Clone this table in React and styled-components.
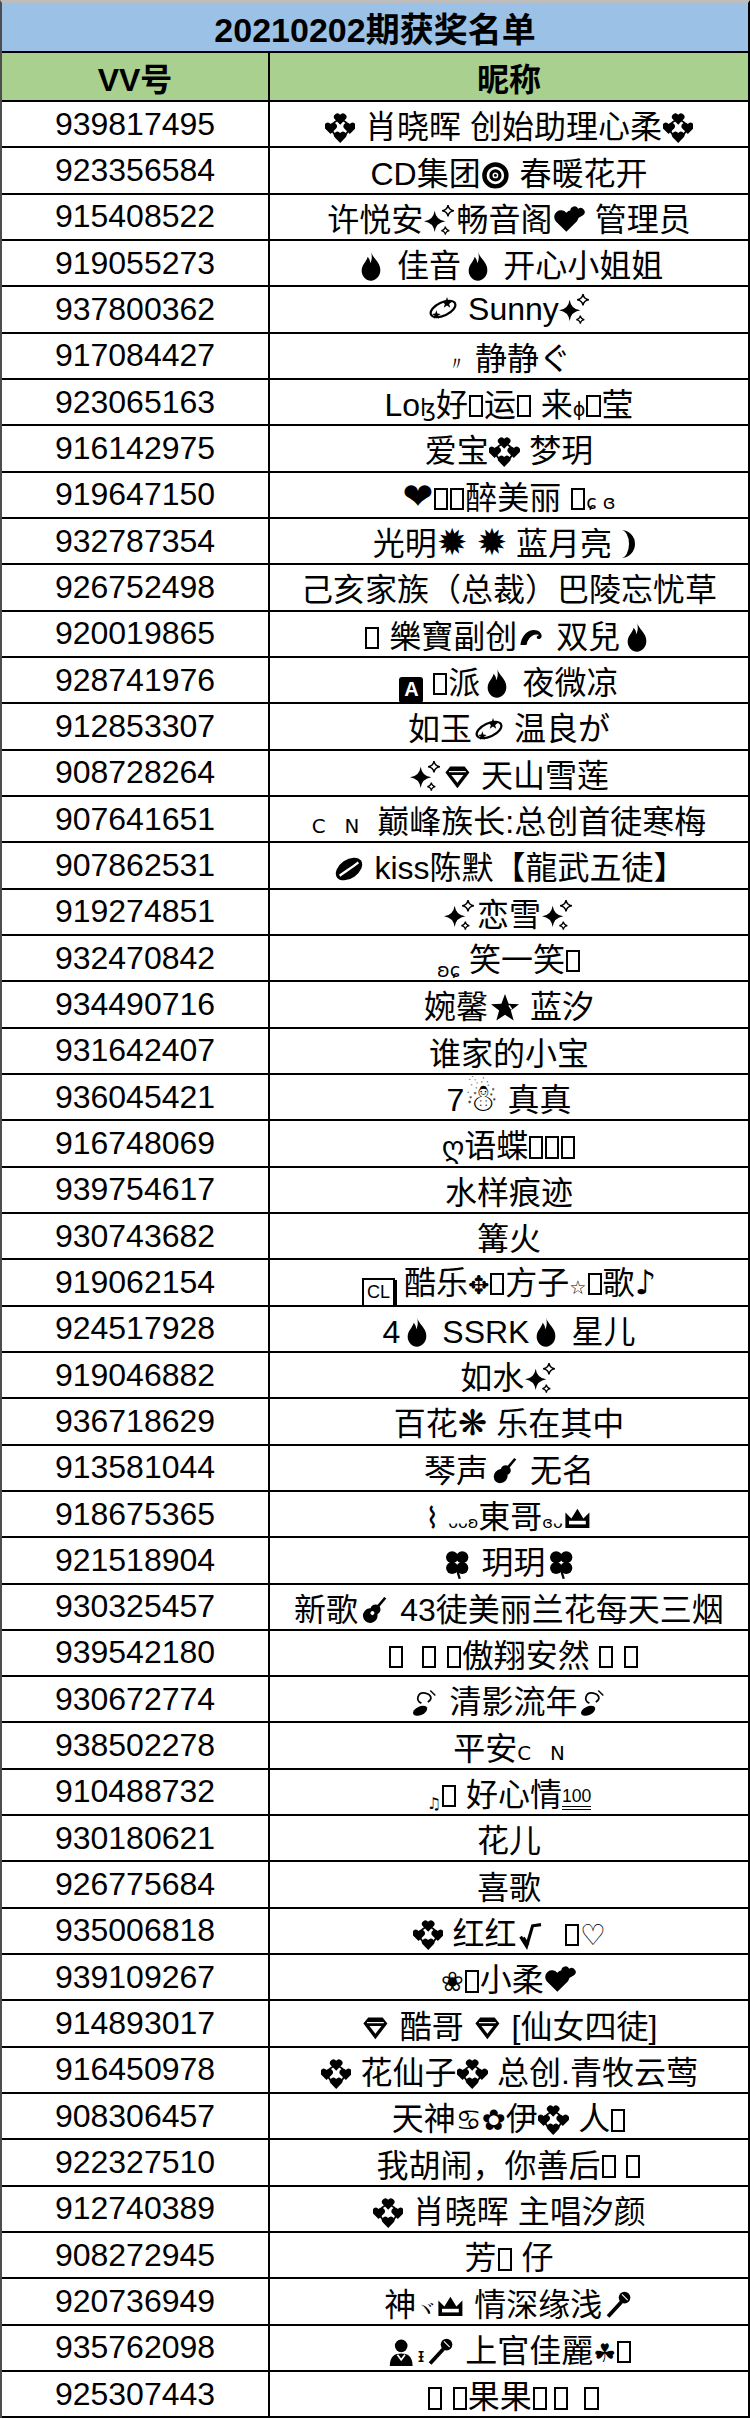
import React from "react";
import styled, { createGlobalStyle } from "styled-components";

const GlobalStyle = createGlobalStyle`
  html, body {
    margin: 0;
    padding: 0;
    background: #fff;
  }
  body {
    font-family: "Liberation Sans", "Noto Sans CJK SC", sans-serif;
    color: #000;
  }
`;

const Sheet = styled.div`
  width: 750px;
  box-sizing: border-box;
  border-top: 3px solid #bdbdbd;
  border-left: 2px solid #4d4d4d;
  border-right: 2px solid #000;
  overflow: hidden;
`;

const Title = styled.div`
  height: 50px;
  box-sizing: border-box;
  background: #9bc2e6;
  border-bottom: 2px solid #000;
  display: flex;
  align-items: center;
  justify-content: center;
  font-size: 34px;
  font-weight: 700;
`;

const Row = styled.div`
  display: grid;
  grid-template-columns: 268px 1fr;
  height: ${(p) => p.$h}px;
  background: ${(p) => p.$bg || "#fff"};
`;

const Cell = styled.div`
  box-sizing: border-box;
  display: flex;
  align-items: center;
  justify-content: center;
  border-bottom: 2px solid #000;
  border-right: ${(p) => (p.$first ? "2px solid #000" : "none")};
  font-size: 32px;
  font-weight: ${(p) => (p.$head ? 700 : 400)};
  white-space: nowrap;
  overflow: hidden;
`;

const Name = styled.span`
  display: inline-block;
  white-space: nowrap;
`;

const Tofu = styled.span`
  display: inline-block;
  box-sizing: border-box;
  width: 0.44em;
  height: 0.7em;
  border: 2px solid #000;
  vertical-align: -0.04em;
  margin: 0 ${(p) => p.$gap || 0.03}em;
`;

const Glyph = styled.span`
  font-family: "DejaVu Sans", sans-serif;
  font-size: ${(p) => p.$s || 1}em;
  line-height: 1;
  vertical-align: ${(p) => p.$va || "0"};
`;

const Small = styled.span`
  font-family: "DejaVu Sans", sans-serif;
  font-size: ${(p) => p.$s || 0.6}em;
  vertical-align: ${(p) => p.$va || "0"};
`;

const NegA = styled.span`
  display: inline-flex;
  align-items: center;
  justify-content: center;
  width: 24px;
  height: 26px;
  background: #000;
  color: #fff;
  border-radius: 3px;
  font-size: 20px;
  font-weight: 700;
  vertical-align: -2px;
`;

const BoxCL = styled.span`
  display: inline-flex;
  align-items: center;
  justify-content: center;
  box-sizing: border-box;
  height: 30px;
  padding: 0 3px;
  border: 2px solid #000;
  box-shadow: 2px 2px 0 #000;
  font-size: 18px;
  vertical-align: -4px;
`;

const Hundred = styled.span`
  font-size: 0.55em;
  border-bottom: 4px double #000;
  vertical-align: 0.25em;
  line-height: 1;
`;

const Svg = styled.svg.attrs({ viewBox: "0 0 24 24" })`
  width: ${(p) => p.$w || 1}em;
  height: ${(p) => p.$w || 1}em;
  vertical-align: ${(p) => p.$va || "-0.16em"};
  margin: 0 0.02em;
  fill: #000;
`;

const heartD = "M0 4 L-3.8 0.2 A2.1 2.1 0 0 1 0 -2.8 A2.1 2.1 0 0 1 3.8 0.2 Z";

const Hearts = () => (
  <Svg $w={0.95}>
    <circle cx="12" cy="12" r="6.5" fill="none" stroke="#000" strokeWidth="1.4" />
    <path d={heartD} transform="translate(12 4.6) scale(1.15)" />
    <path d={heartD} transform="translate(4.4 12) scale(1.15)" />
    <path d={heartD} transform="translate(19.6 12) scale(1.15)" />
    <path d={heartD} transform="translate(12 19) scale(1.15)" />
  </Svg>
);

const TwoHearts = () => (
  <Svg>
    <path d={heartD} transform="translate(10 12.5) scale(2.1)" />
    <path d={heartD} transform="translate(18 7) rotate(15) scale(1.25)" />
  </Svg>
);

const Sparkle = () => (
  <Svg>
    <path d="M8 5 Q9 12 16 13 Q9 14 8 21 Q7 14 0 13 Q7 12 8 5Z" />
    <path d="M18 0.8 Q18.6 4.4 22.4 5 Q18.6 5.6 18 9.2 Q17.4 5.6 13.6 5 Q17.4 4.4 18 0.8Z" fill="none" stroke="#000" strokeWidth="1.1" />
    <path d="M16 17 Q16.4 19.6 19 20 Q16.4 20.4 16 23 Q15.6 20.4 13 20 Q15.6 19.6 16 17Z" fill="none" stroke="#000" strokeWidth="1" />
  </Svg>
);

const Fire = () => (
  <Svg>
    <path d="M12 1 C13 6 19 9 19 15 C19 19.5 15.8 23 12 23 C8.2 23 5 19.5 5 15.5 C5 11 8.5 9 9.5 5 C11 7 11.5 8 11.2 10 C13 8 12.8 4 12 1Z" />
  </Svg>
);

const Disc = () => (
  <Svg $w={0.9}>
    <circle cx="12" cy="12" r="11" />
    <circle cx="12" cy="12" r="6.2" fill="none" stroke="#fff" strokeWidth="2.2" />
    <circle cx="12" cy="12" r="2.4" fill="#fff" />
    <circle cx="12" cy="12" r="1.2" />
  </Svg>
);

const Dizzy = () => (
  <Svg>
    <ellipse cx="12" cy="12" rx="10" ry="5" transform="rotate(-25 12 12)" fill="none" stroke="#000" strokeWidth="1.6" />
    <path d="M15 3 L16 6 L19 6.4 L16.6 8.2 L17.4 11 L15 9.4 L12.6 11 L13.4 8.2 L11 6.4 L14 6Z" />
    <path d="M7 13 L7.8 15.4 L10.2 15.7 L8.3 17.1 L8.9 19.4 L7 18.1 L5.1 19.4 L5.7 17.1 L3.8 15.7 L6.2 15.4Z" />
  </Svg>
);

const Moon = () => (
  <Svg>
    <path d="M6 1.5 A10.5 10.5 0 0 1 6 22.5 A6 10.5 0 0 0 6 1.5Z" />
  </Svg>
);

const Wave = () => (
  <Svg $w={0.9} $va="-0.05em">
    <path d="M2 20 C3 11 10 6 16 8 C20 9.5 21 14 18 15 C16 15.5 15 14 16 12.5 C13 11.5 9 13 7 20Z" />
    <path d="M8 18 C10 13 14 11 17 12" stroke="#fff" strokeWidth="1" fill="none" />
  </Svg>
);

const Gem = () => (
  <Svg $w={0.9}>
    <path d="M2 8 L6 3 L18 3 L22 8 L12 21Z" />
    <path d="M7 10 L17 10 L12 16.5Z" fill="#fff" />
    <path d="M5 7.2 H19" stroke="#fff" strokeWidth="1" />
  </Svg>
);

const Lips = () => (
  <Svg>
    <ellipse cx="12" cy="12" rx="11" ry="7" transform="rotate(-35 12 12)" />
    <path d="M5 17 C9 14 14 11 19 7" stroke="#fff" strokeWidth="1.8" fill="none" />
  </Svg>
);

const StarShade = () => (
  <Svg>
    <path d="M12 1.5 L14.7 8.8 L22.5 9.1 L16.4 13.9 L18.5 21.4 L12 17.1 L5.5 21.4 L7.6 13.9 L1.5 9.1 L9.3 8.8Z" />
    <path d="M15 10 L17 13" stroke="#fff" strokeWidth="1.2" />
  </Svg>
);

const Clover = () => (
  <Svg $w={0.95}>
    <circle cx="8" cy="6.5" r="4.8" />
    <circle cx="16" cy="6.5" r="4.8" />
    <circle cx="8" cy="15" r="4.8" />
    <circle cx="16" cy="15" r="4.8" />
    <path d="M12 17 L14 23.5" stroke="#000" strokeWidth="1.8" />
  </Svg>
);

const Crown = () => (
  <Svg $w={0.9}>
    <path d="M2 20 L2 7 L7 12 L12 4 L17 12 L22 7 L22 20Z" />
    <path d="M5 14 H19 V17 H5Z" fill="#fff" />
  </Svg>
);

const Violin = () => (
  <Svg>
    <g transform="rotate(40 12 12)">
      <ellipse cx="12" cy="17" rx="5" ry="5.5" />
      <ellipse cx="12" cy="11" rx="3.8" ry="3.5" />
      <rect x="11" y="0" width="2" height="10" />
    </g>
  </Svg>
);

const Guitar = () => (
  <Svg>
    <g transform="rotate(40 12 12)">
      <circle cx="12" cy="17.5" r="5.5" />
      <circle cx="12" cy="11.5" r="3.8" />
      <rect x="11" y="0" width="2" height="10" />
      <circle cx="12" cy="15" r="1.5" fill="#fff" />
    </g>
  </Svg>
);

const Sax = () => (
  <Svg $w={0.9}>
    <path d="M3 13 L8 21 L13 4 L20 3" stroke="#000" strokeWidth="2.6" fill="none" />
    <path d="M5 14 L9 20" stroke="#000" strokeWidth="3.2" />
  </Svg>
);

const Mic = () => (
  <Svg $w={0.95}>
    <circle cx="17" cy="6" r="4.6" />
    <path d="M14.5 9.5 L4 21" stroke="#000" strokeWidth="3" />
    <path d="M15 3.5 L19.5 8" stroke="#fff" strokeWidth="0.9" />
  </Svg>
);

const Person = () => (
  <Svg $w={0.95}>
    <circle cx="12" cy="7" r="5" />
    <path d="M3 23 C3 15 7 13 12 13 C17 13 21 15 21 23Z" />
    <path d="M9 14 L12 18 L15 14" stroke="#fff" strokeWidth="1.3" fill="none" />
  </Svg>
);

const NoteSwirl = () => (
  <Svg $w={0.95}>
    <path d="M9 12 C4 10 6 3 12 4 C17 5 18 9 14 11" stroke="#000" strokeWidth="1.4" fill="none" />
    <path d="M16 2 L20 6" stroke="#000" strokeWidth="1.1" />
    <ellipse cx="8" cy="18" rx="6" ry="3.4" transform="rotate(-25 8 18)" />
  </Svg>
);

const winners = [
  ["939817495", <><Hearts /> 肖晓晖 创始助理心柔<Hearts /></>],
  ["923356584", <>CD集团<Disc /> 春暖花开</>],
  ["915408522", <>许悦安<Sparkle />畅音阁<TwoHearts /> 管理员</>],
  ["919055273", <><Fire /> 佳音<Fire /> 开心小姐姐</>],
  ["937800362", <><Dizzy /> Sunny<Sparkle /></>],
  ["917084427", <><Small>〃</Small> 静静ぐ</>],
  ["923065163", <>Lo<Small $s={0.7}>ɮ</Small>好<Tofu />运<Tofu /> 来<Small>ɸ</Small><Tofu />莹</>],
  ["916142975", <>爱宝<Hearts /> 梦玥</>],
  ["919647150", <><Glyph $s={1.15}>❤</Glyph><Tofu /><Tofu />醉美丽 <Tofu /><Small>ɕ ɞ</Small></>],
  ["932787354", <>光明<Glyph $s={1.15}>✹</Glyph> <Glyph $s={1.15}>✹</Glyph> 蓝月亮<Moon /></>],
  ["926752498", <>己亥家族（总裁）巴陵忘忧草</>],
  ["920019865", <><Tofu /> 樂寶副创<Wave /> 双兒<Fire /></>],
  ["928741976", <><NegA>A</NegA> <Tofu />派<Fire /> 夜微凉</>],
  ["912853307", <>如玉<Dizzy /> 温良が</>],
  ["908728264", <><Sparkle /><Gem /> 天山雪莲</>],
  ["907641651", <><Small $s={0.62}>C&nbsp;&nbsp;&nbsp;N</Small>&nbsp; 巅峰族长:总创首徒寒梅</>],
  ["907862531", <><Lips /> kiss陈默【龍武五徒】</>],
  ["919274851", <><Sparkle />恋雪<Sparkle /></>],
  ["932470842", <><Small $va="-0.3em">ʚɕ</Small> 笑一笑<Tofu /></>],
  ["934490716", <>婉馨<StarShade /> 蓝汐</>],
  ["931642407", <>谁家的小宝</>],
  ["936045421", <>7<Glyph $s={1.2}>☃</Glyph> 真真</>],
  ["916748069", <><Glyph $s={0.9}>ღ</Glyph>语蝶<Tofu /><Tofu /><Tofu /></>],
  ["939754617", <>水样痕迹</>],
  ["930743682", <>篝火</>],
  ["919062154", <><BoxCL>CL</BoxCL> 酷乐<Glyph $s={0.8}>✥</Glyph><Tofu />方子<Glyph $s={0.6}>☆</Glyph><Tofu />歌<Glyph $s={1.05}>♪</Glyph></>],
  ["924517928", <>4<Fire /> SSRK<Fire /> 星儿</>],
  ["919046882", <>如水<Sparkle /></>],
  ["936718629", <>百花<Glyph $s={1.1}>❋</Glyph> 乐在其中</>],
  ["913581044", <>琴声<Violin /> 无名</>],
  ["918675365", <><Glyph $s={0.9}>⌇</Glyph> <Small $s={0.5}>ᴗᴗʚ</Small>東哥<Small $s={0.5}>ɞᴗ</Small><Crown /></>],
  ["921518904", <><Clover /> 玥玥<Clover /></>],
  ["930325457", <>新歌<Guitar /> 43徒美丽兰花每天三烟</>],
  ["939542180", <><Tofu $gap={0.3} /><Tofu $gap={0.3} /><Tofu />傲翔安然<Tofu $gap={0.3} /><Tofu /></>],
  ["930672774", <><NoteSwirl /> 清影流年<NoteSwirl /></>],
  ["938502278", <>平安<Small $s={0.62}>C&nbsp;&nbsp;&nbsp;N</Small></>],
  ["910488732", <><Small $s={0.5} $va="-0.2em">♫</Small><Tofu /> 好心情<Hundred>100</Hundred></>],
  ["930180621", <>花儿</>],
  ["926775684", <>喜歌</>],
  ["935006818", <><Hearts /> 红红<Sax /> &nbsp;<Tofu /><Glyph $s={0.9}>♡</Glyph></>],
  ["939109267", <><Glyph $s={0.85}>❀</Glyph><Tofu />小柔<TwoHearts /></>],
  ["914893017", <><Gem /> 酷哥 <Gem /> [仙女四徒]</>],
  ["916450978", <><Hearts /> 花仙子<Hearts /> 总创.青牧云莺</>],
  ["908306457", <>天神<Glyph $s={0.9}>♋</Glyph><Glyph $s={0.9}>✿</Glyph>伊<Hearts /> 人<Tofu /></>],
  ["922327510", <>我胡闹，你善后<Tofu /> <Tofu /></>],
  ["912740389", <><Hearts /> 肖晓晖 主唱汐颜</>],
  ["908272945", <>芳<Tofu /> 仔</>],
  ["920736949", <>神<Small>ヾ</Small><Crown /> 情深缘浅<Mic /></>],
  ["935762098", <><Person /><Small>ᵻ</Small><Mic /> 上官佳麗<Glyph $s={0.8}>☘</Glyph><Tofu /></>],
  ["925307443", <><Tofu $gap={0.3} /><Tofu />果果<Tofu /><Tofu $gap={0.2} /> <Tofu /></>],
];

const App = () => {
  return (
    <>
      <GlobalStyle />
      <Sheet>
        <Title>20210202期获奖名单</Title>
        <Row $h={49} $bg="#a9d08e">
          <Cell $first $head>VV号</Cell>
          <Cell $head>昵称</Cell>
        </Row>
        {winners.map(([vv, name]) => (
          <Row key={vv} $h={46.34}>
            <Cell $first>{vv}</Cell>
            <Cell>
              <Name>{name}</Name>
            </Cell>
          </Row>
        ))}
      </Sheet>
    </>
  );
};

export default App;
